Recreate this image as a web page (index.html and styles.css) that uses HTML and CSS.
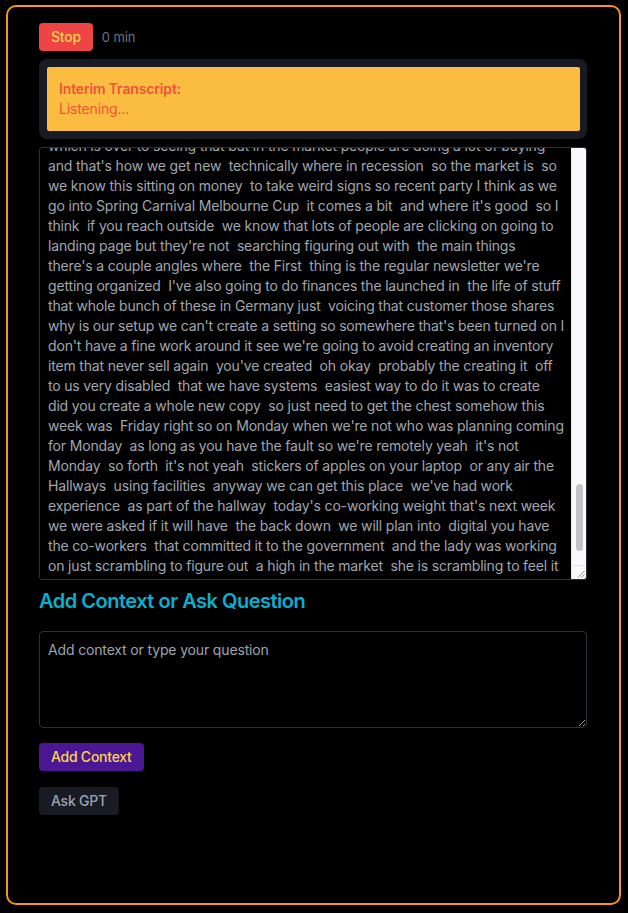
FILE: index.html
```html
<!DOCTYPE html>
<html lang="en">
<head>
<meta charset="utf-8">
<title>Transcript</title>
<link rel="stylesheet" href="styles.css">
</head>
<body>
<div class="panel">
  <div class="toolbar">
    <button class="btn btn-stop">Stop</button>
    <span class="elapsed">0 min</span>
  </div>
  <div class="interim-wrap">
    <div class="interim">
      <div class="interim-title">Interim Transcript:</div>
      <div class="interim-text">Listening...</div>
    </div>
  </div>
  <div class="transcript-box">
    <div class="transcript-view">
      <div class="transcript-text">which is over to seeing that but in the market people are doing a lot of buying
and that's how we get new  technically where in recession  so the market is  so
we know this sitting on money  to take weird signs so recent party I think as we
go into Spring Carnival Melbourne Cup  it comes a bit  and where it's good  so I
think  if you reach outside  we know that lots of people are clicking on going to
landing page but they're not  searching figuring out with  the main things
there's a couple angles where  the First  thing is the regular newsletter we're
getting organized  I've also going to do finances the launched in  the life of stuff
that whole bunch of these in Germany just  voicing that customer those shares
why is our setup we can't create a setting so somewhere that's been turned on I
don't have a fine work around it see we're going to avoid creating an inventory
item that never sell again  you've created  oh okay  probably the creating it  off
to us very disabled  that we have systems  easiest way to do it was to create
did you create a whole new copy  so just need to get the chest somehow this
week was  Friday right so on Monday when we're not who was planning coming
for Monday  as long as you have the fault so we're remotely yeah  it's not
Monday  so forth  it's not yeah  stickers of apples on your laptop  or any air the
Hallways  using facilities  anyway we can get this place  we've had work
experience  as part of the hallway  today's co-working weight that's next week
we were asked if it will have  the back down  we will plan into  digital you have
the co-workers  that committed it to the government  and the lady was working
on just scrambling to figure out  a high in the market  she is scrambling to feel it</div>
    </div>
    <div class="scrollbar">
      <div class="scroll-track"></div>
      <div class="scroll-thumb"></div>
      <div class="scroll-corner">
        <svg class="resizer" width="8" height="8" viewBox="0 0 8 8">
          <path d="M1 7.5 L7.5 1 M4.5 7.5 L7.5 4.5" stroke="#8a8a8a" stroke-width="1" fill="none"/>
        </svg>
      </div>
    </div>
  </div>
  <h2 class="section-title">Add Context or Ask Question</h2>
  <textarea class="context-input" placeholder="Add context or type your question"></textarea>
  <div class="actions">
    <button class="btn btn-add">Add Context</button>
    <button class="btn btn-ask">Ask GPT</button>
  </div>
</div>
</body>
</html>
```

FILE: styles.css
```css
html, body {
  margin: 0;
  padding: 0;
  background: #000;
}

body {
  font-family: Inter, "Noto Sans", sans-serif;
  padding: 5px 7px 0 6px;
}

.panel {
  box-sizing: border-box;
  height: 900px;
  border: 2px solid #f7941d;
  border-radius: 10px;
  padding: 16px 32px 16px 31px;
  display: flex;
  flex-direction: column;
  align-items: stretch;
}

.toolbar {
  display: flex;
  align-items: center;
  gap: 9px;
}

.btn {
  font-family: inherit;
  font-size: 14px;
  line-height: 20px;
  font-weight: 500;
  letter-spacing: -0.25px;
  border: none;
  border-radius: 4px;
  padding: 4px 12px;
  cursor: pointer;
}

.btn-stop {
  background: #ef4444;
  color: #fcd34d;
}

.elapsed {
  color: #6b7280;
  font-size: 13px;
  letter-spacing: -0.1px;
}

.interim-wrap {
  margin-top: 8px;
  background: #181b24;
  border-radius: 8px;
  padding: 8px 7px 8px 8px;
}

.interim {
  background: #fabd42;
  border-radius: 2px;
  padding: 12px;
  color: #ee5437;
  font-size: 14px;
  line-height: 20px;
  letter-spacing: -0.15px;
}

.interim-title {
  font-weight: 600;
}

.transcript-box {
  box-sizing: border-box;
  margin-top: 8px;
  height: 433px;
  display: flex;
  border: 1px solid #2b303b;
  border-radius: 3px;
  overflow: hidden;
  background: #000;
}

.transcript-view {
  flex: 1;
  min-width: 0;
  display: flex;
  flex-direction: column;
  justify-content: flex-end;
  overflow: hidden;
  padding: 8px 8px 3px;
}

.transcript-text {
  flex: none;
  color: #a1a6ae;
  font-size: 14px;
  line-height: 20px;
  letter-spacing: -0.17px;
  white-space: pre;
}

.scrollbar {
  width: 14px;
  flex: none;
  display: flex;
  flex-direction: column;
  background: #fafafa;
  border-left: 1px solid #ececec;
}

.scroll-track {
  flex: 1;
}

.scroll-thumb {
  height: 67px;
  margin: 0 3px 14px 4px;
  border-radius: 4px;
  background: #c4c4c4;
}

.scroll-corner {
  height: 14px;
  border-top: 1px solid #e6e6e6;
  display: flex;
  align-items: flex-end;
  justify-content: flex-end;
  padding: 0 1px 1px 0;
  box-sizing: border-box;
}

.resizer {
  display: block;
}

.section-title {
  margin: 7px 0 0;
  font-size: 20px;
  line-height: 28px;
  font-weight: 600;
  letter-spacing: -0.5px;
  color: #06b0d2;
}

.context-input {
  display: block;
  box-sizing: border-box;
  margin-top: 16px;
  height: 97px;
  width: 100%;
  background: #000;
  color: #a1a6ae;
  border: 1px solid #2b303b;
  border-radius: 4px;
  padding: 8px;
  font-family: inherit;
  font-size: 14px;
  line-height: 20px;
  letter-spacing: -0.15px;
  outline: none;
}

.context-input::placeholder {
  color: #9ca3af;
}

.actions {
  margin-top: 15px;
  display: flex;
  flex-direction: column;
  align-items: flex-start;
  gap: 16px;
}

.btn-add {
  background: #4c1795;
  color: #fcd34d;
}

.btn-ask {
  background: #181b24;
  color: #9ca3af;
}
```
